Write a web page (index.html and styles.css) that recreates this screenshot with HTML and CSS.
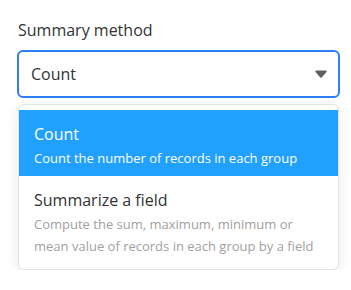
FILE: index.html
```html
<!DOCTYPE html>
<html lang="en">
<head>
    <meta charset="UTF-8">
    <meta name="viewport" content="width=device-width, initial-scale=1.0">
    <title>Summary method</title>
    <link rel="stylesheet" href="styles.css">
</head>
<body>
    <div class="field">
        <div class="field-label">Summary method</div>

        <div class="select">
            <span class="select-value">Count</span>
            <svg class="select-arrow" width="12" height="8" viewBox="0 0 12 8">
                <path d="M1.2 0.5h9.6c0.8 0 1.2 0.9 0.7 1.5l-4.8 5.4c-0.4 0.4-1 0.4-1.4 0L0.5 2c-0.5-0.6-0.1-1.5 0.7-1.5z"/>
            </svg>
        </div>

        <div class="menu">
            <div class="menu-item active">
                <div class="menu-title">Count</div>
                <div class="menu-desc">Count the number of records in each group</div>
            </div>
            <div class="menu-item">
                <div class="menu-title">Summarize a field</div>
                <div class="menu-desc">Compute the sum, maximum, minimum or mean value of records in each group by a field</div>
            </div>
        </div>
    </div>
</body>
</html>
```
FILE: styles.css
```css
body {
    font-family: "Open Sans", Arial, sans-serif;
    margin: 0;
    padding: 18px 0 0 17px;
    background: #fff;
    color: #333;
}
.field {
    width: 323px;
}
.field-label {
    font-size: 16px;
    line-height: 24px;
    padding-left: 1px;
    margin-bottom: 8px;
    color: #333;
}
.select {
    display: flex;
    align-items: center;
    justify-content: space-between;
    box-sizing: border-box;
    height: 48px;
    padding: 0 11px 0 12px;
    border: 2px solid #2d7ff9;
    border-radius: 6px;
    background: #fff;
}
.select-value {
    font-size: 16px;
    line-height: 24px;
    color: #333;
}
.select-arrow {
    fill: #5f5f5f;
}
.menu {
    margin: 6px 1px 0;
    padding: 5px 0;
    background: #fff;
    border: 1px solid #e3e3e3;
    border-radius: 6px;
    box-shadow: 0 4px 14px rgba(0, 0, 0, 0.09);
}
.menu-item {
    padding: 12px 16px 7px 15px;
}
.menu-item.active {
    background: #20a0ff;
    color: #fff;
}
.menu-title {
    font-size: 16px;
    line-height: 24px;
}
.menu-desc {
    margin-top: 1px;
    font-size: 13px;
    line-height: 22px;
    color: #a3a09e;
}
.menu-item.active .menu-desc {
    color: #fff;
}
```
